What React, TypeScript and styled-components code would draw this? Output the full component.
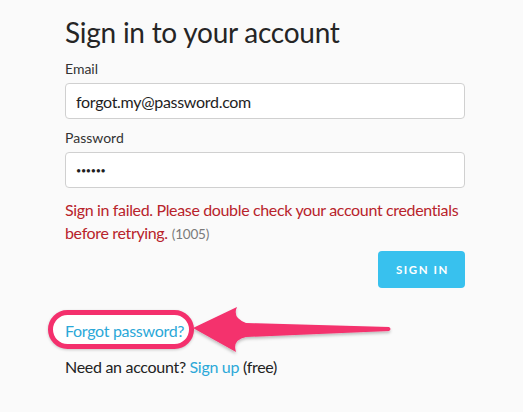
import React from "react";
import styled, { createGlobalStyle } from "styled-components";

const Global = createGlobalStyle`
  html, body { margin: 0; padding: 0; background: #fafafa; }
  body { font-family: "Lato", "Open Sans", sans-serif; color: #2b2b2b; }
`;

const Page = styled.div`
  position: relative;
  width: 523px;
  height: 412px;
  overflow: hidden;
`;

const Form = styled.div`
  width: 400px;
  padding: 12px 0 0 65px;
  display: flex;
  flex-direction: column;
`;

const Title = styled.h1`
  margin: 0 0 8px;
  font-size: 28px;
  letter-spacing: -0.25px;
  font-weight: 400;
  line-height: 40px;
  color: #252525;
`;

const Label = styled.label`
  font-size: 14px;
  line-height: 17px;
  color: #333;
  margin-bottom: 6px;
`;

const Input = styled.input<{ $mb?: number; $size?: number }>`
  box-sizing: border-box;
  width: 400px;
  height: 36px;
  border: 1px solid #d0d0d0;
  border-radius: 4px;
  background: #fff;
  padding: 0 10px;
  font-family: "Lato", sans-serif;
  font-size: ${(p) => p.$size ?? 16}px;
  letter-spacing: -0.3px;
  color: #1e1e1e;
  outline: none;
  margin: 0 0 ${(p) => p.$mb ?? 10}px;
`;

const ErrorText = styled.p`
  margin: 0;
  font-size: 16px;
  letter-spacing: -0.35px;
  line-height: 23px;
  color: #b8232b;
`;

const Code = styled.span`
  margin-left: 4px;
  font-size: 13.5px;
  letter-spacing: -0.2px;
  color: #7a7a7a;
`;

const ButtonRow = styled.div`
  display: flex;
  justify-content: flex-end;
  margin-top: 5px;
`;

const Button = styled.button`
  width: 87px;
  height: 37px;
  border: none;
  border-radius: 4px;
  background: #38c1ee;
  color: #fff;
  font-family: "Lato", sans-serif;
  font-weight: 700;
  font-size: 11.5px;
  letter-spacing: 1.6px;
  padding: 0 0 0 2px;
`;

const LinkLine = styled.div<{ $mt: number }>`
  font-size: 16px;
  letter-spacing: -0.3px;
  line-height: 22px;
  color: #222;
  margin-top: ${(p) => p.$mt}px;
`;

const Highlight = styled.span`
  position: relative;
  display: inline-block;
`;

const Oval = styled.span`
  position: absolute;
  left: -17px;
  top: -10px;
  width: 136px;
  height: 29px;
  border: 5px solid #f4306d;
  border-radius: 20px;
  background: #fff;
  box-shadow: 0 1px 3px rgba(0, 0, 0, 0.2);
`;

const Link = styled.a`
  position: relative;
  color: #2ba8d8;
  text-decoration: none;
`;

const Overlay = styled.svg`
  position: absolute;
  left: 0;
  top: 0;
  pointer-events: none;
`;

export default function App() {
  return (
    <Page>
      <Global />
      <Form>
        <Title>Sign in to your account</Title>
        <Label>Email</Label>
        <Input readOnly value="forgot.my@password.com" />
        <Label>Password</Label>
        <Input readOnly type="password" value="secret" $mb={10} $size={9} />
        <ErrorText>
          Sign in failed. Please double check your account credentials before retrying.
          <Code>(1005)</Code>
        </ErrorText>
        <ButtonRow>
          <Button>SIGN IN</Button>
        </ButtonRow>
        <LinkLine $mt={32}>
          <Highlight>
            <Oval />
            <Link href="#">Forgot password?</Link>
          </Highlight>
        </LinkLine>
        <LinkLine $mt={14}>
          Need an account? <Link href="#">Sign up</Link> (free)
        </LinkLine>
      </Form>
      <Overlay width="523" height="412" viewBox="0 0 523 412">
        <defs>
          <filter id="sh" x="-10%" y="-30%" width="120%" height="160%">
            <feDropShadow dx="0" dy="2" stdDeviation="1.5" floodColor="#000" floodOpacity="0.25" />
          </filter>
        </defs>
        <path
          d="M193,328 L237,307 Q232,318 246,323 L389,327 Q392,329 389,331 L246,337 Q232,340 236,352 Z"
          fill="#f4306d"
          filter="url(#sh)"
        />
      </Overlay>
    </Page>
  );
}
